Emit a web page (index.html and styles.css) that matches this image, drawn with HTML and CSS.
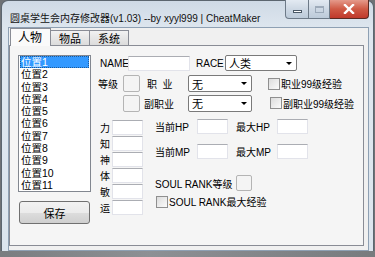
FILE: index.html
```html
<!DOCTYPE html>
<html lang="zh-CN">
<head>
    <meta charset="UTF-8">
    <meta name="viewport" content="width=device-width, initial-scale=1.0">
    <title>圆桌学生会内存修改器</title>
    <link rel="stylesheet" href="styles.css">
</head>
<body>
    <div class="window">
        <div class="titlebar">
            <span class="title">圆桌学生会内存修改器(v1.03) --by xyyl999 | CheatMaker</span>
            <div class="caption-buttons">
                <div class="cap-btn cap-min"><span class="min-bar"></span></div>
                <div class="cap-btn cap-max"><span class="max-box"></span></div>
                <div class="cap-btn cap-close">
                    <svg width="12" height="10" viewBox="0 0 12 10">
                        <path d="M2 1 L10 9 M10 1 L2 9" stroke="#fff" stroke-width="2.4" stroke-linecap="square"/>
                    </svg>
                </div>
            </div>
        </div>

        <div class="client">
            <!-- tabs -->
            <div class="tabs">
                <div class="tab active">人物</div>
                <div class="tab">物品</div>
                <div class="tab">系统</div>
            </div>

            <div class="panel">
                <div class="left-col">
                    <ul class="slot-list">
                        <li class="selected">位置1</li>
                        <li>位置2</li>
                        <li>位置3</li>
                        <li>位置4</li>
                        <li>位置5</li>
                        <li>位置6</li>
                        <li>位置7</li>
                        <li>位置8</li>
                        <li>位置9</li>
                        <li>位置10</li>
                        <li>位置11</li>
                    </ul>
                    <button class="save-btn">保存</button>
                </div>

                <div class="form">
                    <div class="row row-name">
                        <span class="lbl lbl-name">NAME</span>
                        <span class="input input-name"></span>
                        <span class="lbl lbl-race">RACE</span>
                        <span class="select select-race">人类<i class="arrow"></i></span>
                    </div>

                    <div class="row row-job">
                        <span class="lbl lbl-level">等级</span>
                        <span class="box"></span>
                        <span class="lbl lbl-job">职&nbsp;&nbsp;业</span>
                        <span class="select select-job">无<i class="arrow"></i></span>
                        <span class="check check-job"></span>
                        <span class="check-text">职业99级经验</span>
                    </div>

                    <div class="row row-subjob">
                        <span class="spacer-level"></span>
                        <span class="box"></span>
                        <span class="lbl lbl-subjob">副职业</span>
                        <span class="select select-job">无<i class="arrow"></i></span>
                        <span class="check check-subjob"></span>
                        <span class="check-text">副职业99级经验</span>
                    </div>

                    <div class="stats">
                        <div class="stat-col">
                            <div class="stat"><span class="stat-lbl">力</span><span class="input input-stat"></span></div>
                            <div class="stat"><span class="stat-lbl">知</span><span class="input input-stat"></span></div>
                            <div class="stat"><span class="stat-lbl">神</span><span class="input input-stat"></span></div>
                            <div class="stat"><span class="stat-lbl">体</span><span class="input input-stat"></span></div>
                            <div class="stat"><span class="stat-lbl">敏</span><span class="input input-stat"></span></div>
                            <div class="stat"><span class="stat-lbl">运</span><span class="input input-stat"></span></div>
                        </div>

                        <div class="vital-col">
                            <div class="vital">
                                <span class="lbl lbl-cur">当前HP</span>
                                <span class="input input-stat"></span>
                                <span class="lbl lbl-max">最大HP</span>
                                <span class="input input-stat"></span>
                            </div>
                            <div class="vital vital-mp">
                                <span class="lbl lbl-cur">当前MP</span>
                                <span class="input input-stat"></span>
                                <span class="lbl lbl-max">最大MP</span>
                                <span class="input input-stat"></span>
                            </div>
                            <div class="soul">
                                <span class="lbl lbl-soul">SOUL RANK等级</span>
                                <span class="box box-soul"></span>
                            </div>
                            <div class="soul-check">
                                <span class="check"></span>
                                <span class="check-text">SOUL RANK最大经验</span>
                            </div>
                        </div>
                    </div>
                </div>
            </div>
        </div>
    </div>
    <div class="desktop"></div>
</body>
</html>
```

FILE: styles.css
```css
* {
  box-sizing: border-box;
}

body {
  margin: 0;
  width: 375px;
  height: 257px;
  overflow: hidden;
  background: #6f7276;
  font-family: "Liberation Sans", "Noto Sans CJK SC", sans-serif;
  font-size: 10px;
  color: #000;
}

.window {
  width: 373px;
  height: 251px;
  margin-left: 1px;
  border: 1px solid #5c6670;
  border-bottom: none;
  border-radius: 7px 7px 0 0;
  background: linear-gradient(#cfdae6, #dfe7ef 30px, #dce5ee);
  padding: 0 4px 0 6px;
  display: flex;
  flex-direction: column;
}

.titlebar {
  height: 26px;
  display: flex;
  align-items: flex-start;
}

.title {
  margin-top: 9px;
  margin-left: 2px;
  font-size: 10px;
  white-space: nowrap;
  color: #111;
}

.caption-buttons {
  margin-left: auto;
  display: flex;
  height: 19px;
  margin-top: -1px;
}

.cap-btn {
  height: 19px;
  border: 1px solid #6d7a88;
  border-top: none;
  display: flex;
  align-items: center;
  justify-content: center;
}

.cap-min {
  width: 24px;
  border-radius: 0 0 0 4px;
  background: linear-gradient(#e3eaf2, #cdd8e4 50%, #bccad9);
}

.cap-max {
  width: 21px;
  border-left: none;
  background: linear-gradient(#e3eaf2, #cdd8e4 50%, #bccad9);
}

.cap-close {
  width: 39px;
  border-left: none;
  border-color: #5a2a22;
  border-radius: 0 0 4px 0;
  background: linear-gradient(#e59a8b, #cf5a45 50%, #c0392b);
}

.min-bar {
  width: 9px;
  height: 3px;
  margin-top: 5px;
  background: #fff;
  border: 1px solid #4a5866;
}

.max-box {
  width: 9px;
  height: 7px;
  border: 1px solid #8796a6;
  border-top-width: 2px;
  opacity: 0.7;
}

.client {
  width: 361px;
  height: 224px;
  border: 1px solid #8ea0b3;
  background: #f0f0f0;
  padding: 0 0 0 0;
}

.tabs {
  display: flex;
  align-items: flex-end;
  height: 17px;
  padding-left: 1px;
}

.tab {
  height: 15px;
  padding: 0 8px;
  border: 1px solid #898c95;
  border-bottom: none;
  margin-right: -1px;
  background: linear-gradient(#f2f2f2, #e6e6e6 50%, #dcdcdc);
  font-family: "Noto Sans CJK SC", sans-serif;
  font-size: 11px;
  line-height: 14px;
}

.tab.active {
  height: 17px;
  padding: 0 8px 0 7px;
  background: #fafafa;
  position: relative;
  z-index: 1;
  margin-bottom: -1px;
  height: 18px;
  font-size: 12px;
  line-height: 16px;
}

.panel {
  width: 355px;
  height: 201px;
  border: 1px solid #898c95;
  background: #f5f5f5;
  display: flex;
  align-items: flex-start;
  padding: 9px 0 0 8px;
  margin-left: 0;
}

/* left column: list + save */
.left-col {
  width: 73px;
  display: flex;
  flex-direction: column;
}

.slot-list {
  list-style: none;
  margin: 0;
  padding: 0 1px;
  height: 137px;
  border: 1px solid #828790;
  background: #fff;
  font-size: 10.5px;
}

.slot-list li {
  height: 12.3px;
  line-height: 12px;
  padding-left: 1px;
}

.slot-list li.selected {
  background: #3399ff;
  color: #fff;
  outline: 1px dotted #1c5a9a;
  outline-offset: -1px;
}

.save-btn {
  width: 71px;
  height: 23px;
  margin: 9px 0 0 1px;
  border: 1px solid #707070;
  border-radius: 3px;
  background: linear-gradient(#f2f2f2, #ebebeb 50%, #dddddd 50%, #cfcfcf);
  font-family: "Noto Sans CJK SC", sans-serif;
  font-size: 11px;
  padding: 0;
  color: #000;
}

/* right form */
.form {
  margin-left: 9px;
  display: flex;
  flex-direction: column;
}

.row {
  display: flex;
  align-items: center;
}

.lbl {
  white-space: nowrap;
}

.input {
  display: block;
  background: #fff;
  border: 1px solid #e2e3ea;
  border-top-color: #abadb3;
}

.row-name {
  height: 16px;
}

.lbl-name {
  width: 28px;
}

.input-name {
  width: 62px;
  height: 15px;
}

.lbl-race {
  width: 29px;
  margin-left: 6px;
}

.select {
  position: relative;
  display: flex;
  align-items: center;
  padding-left: 3px;
  background: #fff;
  border: 1px solid #7a7a7a;
  border-radius: 2px;
  font-family: "Noto Sans CJK SC", sans-serif;
  font-size: 11px;
}

.select-race {
  width: 72px;
  height: 16px;
}

.select-job {
  width: 64px;
  height: 17px;
}

.arrow {
  position: absolute;
  right: 4px;
  top: 6px;
  width: 0;
  height: 0;
  border-left: 3px solid transparent;
  border-right: 3px solid transparent;
  border-top: 3px solid #000;
}

.row-job {
  margin-top: 4px;
  height: 17px;
}

.lbl-level {
  width: 25px;
  margin-left: -2px;
}

.box {
  width: 17px;
  height: 17px;
  border: 1px solid #b4b4b4;
  border-radius: 2px;
  background: #f4f4f4;
}

.lbl-job {
  width: 41px;
  margin-left: 7px;
}

.check {
  width: 12px;
  height: 12px;
  border: 1px solid #8f8f8f;
  background: linear-gradient(135deg, #dcdcdc, #fbfbfb);
  flex-shrink: 0;
}

.check-job {
  margin-left: 16px;
}

.check-subjob {
  margin-left: 18px;
}

.check-text {
  margin-left: 1px;
  white-space: nowrap;
}

.row-subjob {
  margin-top: 2px;
  height: 18px;
}

.spacer-level {
  width: 23px;
}

.lbl-subjob {
  width: 44px;
  margin-left: 4px;
}

/* stats */
.stats {
  margin-top: 7px;
  display: flex;
  align-items: flex-start;
}

.stat-col {
  display: flex;
  flex-direction: column;
}

.stat {
  display: flex;
  align-items: center;
  height: 16px;
}

.stat-lbl {
  width: 12px;
}

.input-stat {
  width: 31px;
  height: 15px;
}

.vital-col {
  margin-left: 12px;
  display: flex;
  flex-direction: column;
}

.vital {
  display: flex;
  align-items: center;
  height: 15px;
}

.vital-mp {
  margin-top: 10px;
}

.lbl-cur {
  width: 42px;
}

.lbl-max {
  width: 41px;
  margin-left: 8px;
}

.soul {
  display: flex;
  align-items: center;
  margin-top: 16px;
  height: 16px;
}

.lbl-soul {
  width: 81px;
}

.box-soul {
  width: 16px;
  height: 16px;
}

.soul-check {
  display: flex;
  align-items: center;
  margin-top: 3px;
  margin-left: 1px;
}

.desktop {
  height: 6px;
  background: linear-gradient(90deg, #7a7d80, #8d9094 40%, #787b7e);
}
```
